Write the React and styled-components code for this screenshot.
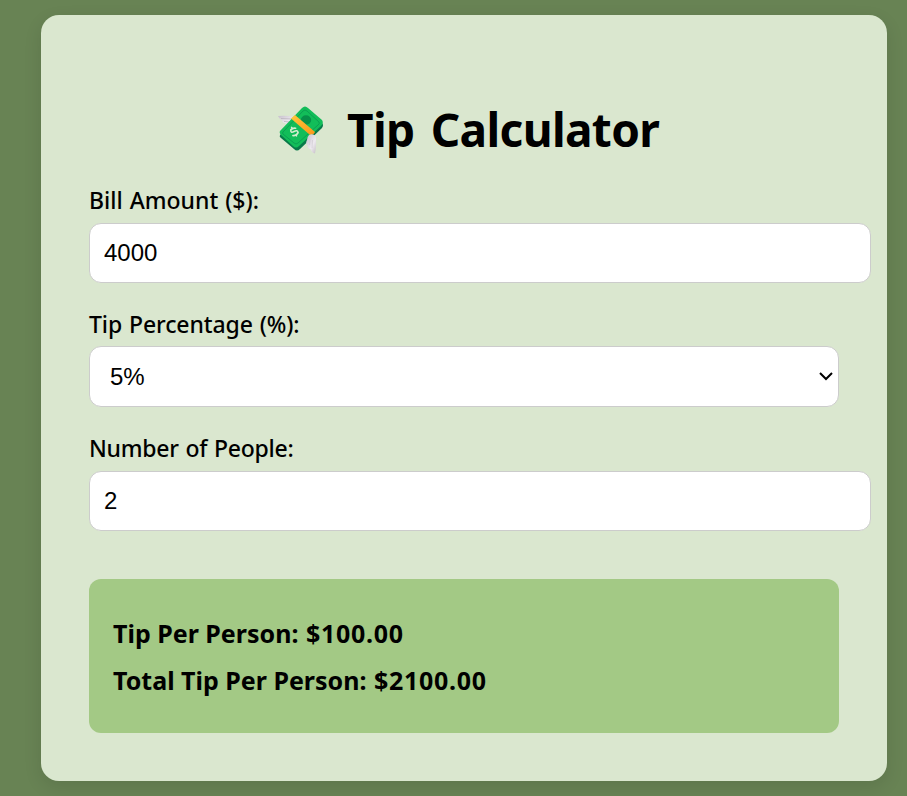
import React, { useState } from "react";
import styled, { createGlobalStyle } from "styled-components";

const GlobalStyle = createGlobalStyle`
  * { box-sizing: border-box; }
  body {
    margin: 0;
    background: #688354;
    color: #000;
    font-family: "Noto Sans", "Open Sans", sans-serif;
  }
`;

const Page = styled.main`
  height: 796px;
  padding: 15px 20px 15px 41px;
  overflow: hidden;
`;

const Card = styled.section`
  width: 846px;
  height: 766px;
  padding: 83px 48px 48px;
  border-radius: 18px;
  background: #dae7cf;
  box-shadow: 0 6px 18px rgba(0, 0, 0, 0.1);
`;

const Title = styled.h1`
  display: flex;
  align-items: center;
  height: 64px;
  margin: 0 0 22px;
  padding: 0 0 2px 189px;
  font-size: 46px;
  font-weight: 700;
  line-height: 62px;
  letter-spacing: -0.65px;
  word-spacing: 5px;
  white-space: nowrap;
`;

const MoneyIcon = styled.svg`
  flex: none;
  width: 46px;
  height: 48px;
  margin: 2px 23px 0 0;
`;

const Field = styled.div`
  height: 124px;
`;

const Label = styled.label`
  display: block;
  height: 39px;
  font-size: 23px;
  font-weight: 500;
  line-height: 32px;
  letter-spacing: ${(p) => p.$spacing || "0"};
  word-spacing: 1px;
  white-space: nowrap;
`;

const Input = styled.input`
  display: block;
  width: 782px;
  height: 60px;
  padding: 0 14px;
  border: 1px solid #ccc;
  border-radius: 12px;
  background: #fff;
  color: #000;
  font: 24px "Liberation Sans", Arial, sans-serif;
  outline: none;
`;

const SelectWrap = styled.div`
  position: relative;
  width: 750px;
`;

const Select = styled.select`
  display: block;
  appearance: none;
  width: 100%;
  height: 61px;
  margin-top: -1px;
  padding: 0 20px;
  border: 1px solid #ccc;
  border-radius: 12px;
  background: #fff;
  color: #000;
  font: 24px "Liberation Sans", Arial, sans-serif;
  outline: none;
`;

const Chevron = styled.svg`
  position: absolute;
  top: 25px;
  right: 5px;
  width: 16px;
  height: 10px;
  pointer-events: none;
`;

const Result = styled.div`
  height: 154px;
  margin-top: 23px;
  padding: 31px 24px;
  border-radius: 12px;
  background: #a3c985;
`;

const ResultLine = styled.p`
  height: 47px;
  margin: 0;
  font-size: 25px;
  font-weight: 700;
  line-height: 47px;
  white-space: nowrap;
`;

const Amount = styled.span`
  margin-left: 1px;
  letter-spacing: 0.7px;
`;

function MoneyWithWings() {
  return (
    <MoneyIcon viewBox="0 0 46 48" aria-hidden="true">
      <defs>
        <linearGradient id="wing" x1="0" y1="0" x2="1" y2="1">
          <stop offset="0" stopColor="#c5bfca" />
          <stop offset="0.6" stopColor="#eeeaf0" />
          <stop offset="1" stopColor="#c5bfc6" />
        </linearGradient>
        <linearGradient id="band" x1="0" y1="0" x2="1" y2="1">
          <stop offset="0" stopColor="#ffc83c" />
          <stop offset="1" stopColor="#fa9719" />
        </linearGradient>
      </defs>
      <path d="M0 10Q8 9 18 11L13 18Q8 19 7 17Q4 17 4 14Q1 13 0 10Z" fill="url(#wing)" />
      <path d="M3 12.5L14 13M6 15.5L13 16" stroke="#b5aeb8" strokeWidth=".7" />
      <path d="M2 29L26 4Q28 2 31 4L44 17Q46 19 44 22L22 43Q19 46 16 43L3 32Q1 31 2 29Z" fill="#087a49" />
      <path d="M2 25L24 2Q27-1 30 2L44 14Q46 17 43 20L21 40Q18 43 15 40L3 29Q1 27 2 25Z" fill="#12bd59" />
      <path d="M5 26L25 5Q27 3 29 5L41 16Q42 18 40 19L20 37Q18 39 16 37L5 28Q4 27 5 26Z" fill="none" stroke="#0ba052" strokeWidth="1" />
      <ellipse cx="28" cy="14" rx="5.2" ry="4.7" fill="#079049" />
      <path d="M13 12.5L17 9L37 26Q36 29 32 29Z" fill="url(#band)" />
      <g transform="translate(16 25.5) rotate(-30)" fill="none" stroke="#d5edcf" strokeWidth="1.6" strokeLinecap="round">
        <path d="M3-2Q1-4-2-3Q-4 0 0 0Q4 0 3 3Q0 5-3 3M0-4.8V-3.2M0 3.8V5" />
      </g>
      <path d="M31 29Q35 27 37.5 30Q39 38 37 47.5Q34 47 32.5 43Q29 42 29.5 39Q27 38 29 34Q29 31 31 29Z" fill="url(#wing)" />
      <path d="M32 33L31.5 39M34.5 34L34 42" fill="none" stroke="#d0cbd3" strokeWidth=".7" />
    </MoneyIcon>
  );
}

export default function App() {
  const [bill, setBill] = useState("4000");
  const [tip, setTip] = useState("5");
  const [people, setPeople] = useState("2");
  const count = Number(people) || 1;
  const tipShare = (Number(bill) * Number(tip)) / 100 / count;
  const totalShare = Number(bill) / count + tipShare;

  return (
    <>
      <GlobalStyle />
      <Page>
        <Card>
          <Title>
            <MoneyWithWings />
            Tip Calculator
          </Title>
          <Field>
            <Label htmlFor="bill">Bill Amount ($):</Label>
            <Input id="bill" value={bill} onChange={(e) => setBill(e.target.value)} />
          </Field>
          <Field>
            <Label htmlFor="tip" $spacing="-0.1px">Tip Percentage (%):</Label>
            <SelectWrap>
              <Select id="tip" value={tip} onChange={(e) => setTip(e.target.value)}>
                <option value="5">5%</option>
                <option value="10">10%</option>
                <option value="15">15%</option>
                <option value="20">20%</option>
              </Select>
              <Chevron viewBox="0 0 16 10" aria-hidden="true">
                <path d="M2 2L8 8L14 2" fill="none" stroke="#000" strokeWidth="2" />
              </Chevron>
            </SelectWrap>
          </Field>
          <Field>
            <Label htmlFor="people" $spacing="-0.25px">Number of People:</Label>
            <Input id="people" value={people} onChange={(e) => setPeople(e.target.value)} />
          </Field>
          <Result>
            <ResultLine>
              Tip Per Person: <Amount>${tipShare.toFixed(2)}</Amount>
            </ResultLine>
            <ResultLine>
              Total Tip Per Person: <Amount>${totalShare.toFixed(2)}</Amount>
            </ResultLine>
          </Result>
        </Card>
      </Page>
    </>
  );
}
